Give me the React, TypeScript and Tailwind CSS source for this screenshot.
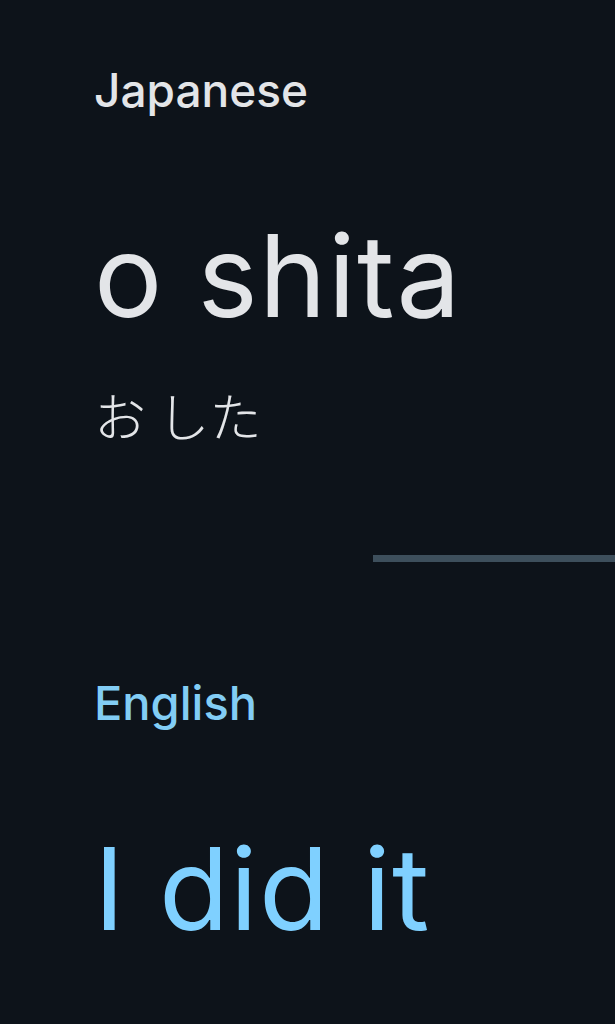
export default function App() {
  return (
    <div className="min-h-[1024px] w-full bg-[#0d131a] overflow-hidden font-['Inter','Noto_Sans_CJK_JP',sans-serif]">
      <section className="pl-[94px] pt-[62px]">
        <div className="text-[46px] leading-[56px] font-medium text-[#e3e5e8]">Japanese</div>
        <div className="mt-[98px] text-[114px] leading-[120px] text-[#e3e5e8] tracking-[1.5px]">o shita</div>
        <div className="mt-[49px] text-[52px] leading-[60px] text-[#e3e5e8] font-['Noto_Sans_CJK_JP',sans-serif] font-light">
          お した
        </div>
      </section>

      <div className="mt-[110px] flex justify-end">
        <div className="h-[7px] w-[242px] bg-[#3d4f5c]" />
      </div>

      <section className="pl-[94px] pt-[113px]">
        <div className="text-[47px] leading-[56px] font-medium text-[#82cdf5]">English</div>
        <div className="mt-[98px] text-[114px] leading-[120px] text-[#7fd0ff] tracking-[1.2px]">I did it</div>
      </section>
    </div>
  );
}
